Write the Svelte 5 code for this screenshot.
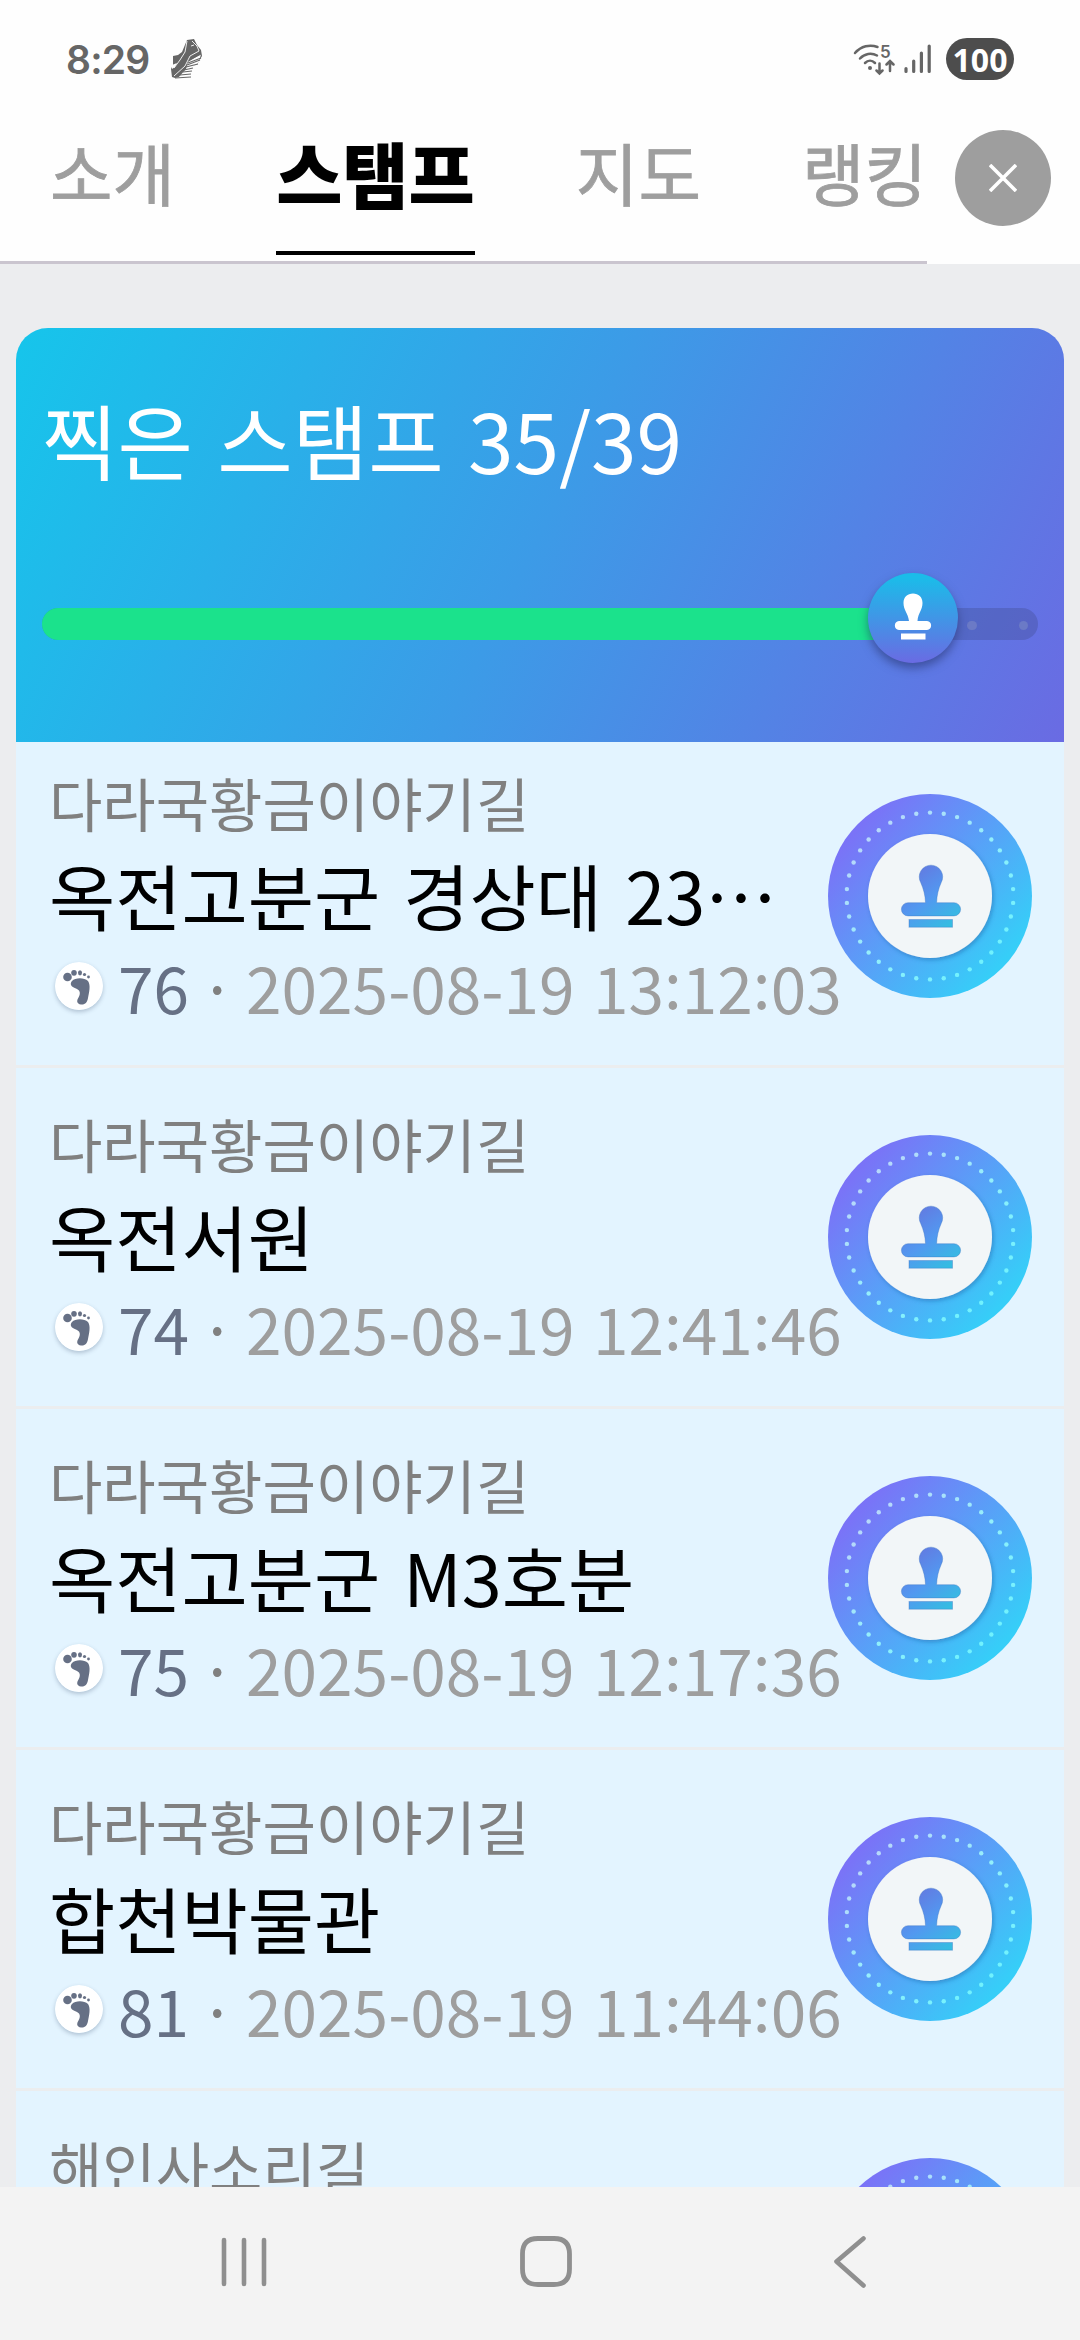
<script lang="ts">
  interface Stamp {
    trail: string;
    name?: string;
    steps?: number;
    time?: string;
  }

  const tabs = ['소개', '스탬프', '지도', '랭킹'];
  let active = $state('스탬프');

  const total = 39;
  const collected = 35;

  const stamps: Stamp[] = [
    { trail: '다라국황금이야기길', name: '옥전고분군 경상대 23…', steps: 76, time: '2025-08-19 13:12:03' },
    { trail: '다라국황금이야기길', name: '옥전서원', steps: 74, time: '2025-08-19 12:41:46' },
    { trail: '다라국황금이야기길', name: '옥전고분군 M3호분', steps: 75, time: '2025-08-19 12:17:36' },
    { trail: '다라국황금이야기길', name: '합천박물관', steps: 81, time: '2025-08-19 11:44:06' },
    { trail: '해인사소리길' }
  ];

  // ring of dots around the badge
  const dots = Array.from({ length: 38 }, (_, i) => {
    const a = (i / 38) * Math.PI * 2;
    return { x: 102 + Math.sin(a) * 83.4, y: 102 - Math.cos(a) * 83.4 };
  });
</script>

{#snippet badge()}
  <svg class="badge" viewBox="0 0 204 204">
    <defs>
      <linearGradient id="ring" x1="0.12" y1="0.2" x2="0.84" y2="0.84">
        <stop offset="0" stop-color="#7a73f7" />
        <stop offset="1" stop-color="#36cef8" />
      </linearGradient>
      <linearGradient id="handle" gradientUnits="userSpaceOnUse" x1="86" y1="74" x2="126" y2="128">
        <stop offset="0" stop-color="#6478e0" />
        <stop offset="0.5" stop-color="#5298f0" />
        <stop offset="1" stop-color="#35bde2" />
      </linearGradient>
      <linearGradient id="dot" x1="0" y1="0" x2="1" y2="1">
        <stop offset="0.1" stop-color="#c3cffb" />
        <stop offset="0.5" stop-color="#94effb" />
        <stop offset="1" stop-color="#56f4ff" />
      </linearGradient>
      <mask id="dotmask">
        {#each dots as d}
          <circle cx={d.x} cy={d.y} r="2.2" fill="#fff" />
        {/each}
      </mask>
      <filter id="lift" x="-20%" y="-20%" width="140%" height="140%">
        <feDropShadow dx="1.5" dy="2" stdDeviation="2" flood-color="#1f4f93" flood-opacity="0.4" />
      </filter>
    </defs>
    <circle cx="102" cy="102" r="102" fill="url(#ring)" />
    <rect width="204" height="204" fill="url(#dot)" mask="url(#dotmask)" />
    <circle cx="102" cy="102" r="62" fill="#f2f6f8" filter="url(#lift)" />
    <g fill="url(#handle)" stroke="#3e76c4" stroke-opacity="0.4" stroke-width="1">
      <path d="M97.500 108.700 C97.300 101 95.500 95 92.700 88.500 A11.700 11.700 0 1 1 113.200 88.500 C110.400 95 108.800 101 108.600 108.700 H126 A6.500 6.500 0 0 1 126 121.900 H80 A6.500 6.500 0 0 1 80 108.700 Z" />
      <rect x="81" y="125.500" width="43.500" height="7.700" />
    </g>
  </svg>
{/snippet}

<div class="screen">
  <div class="status">
    <span class="clock">8:29</span>
    <svg class="shoe" width="34" height="42" viewBox="0 0 34 42">
      <path fill="#666" d="M17 2 L24 1 L27 7 L31 12 L32 18 L28 25 L22 29 L13 38 L5 40 L2 39 L1 31 L3 27 L3 18 L8 17 L12 14 Z" />
      <path fill="#fefefe" d="M2 27 L7 25 L5 29 L2 31 Z M18 24 L31 16 L29 24 L22 30 L21 39 L8 40 L16 31 Z" />
      <path stroke="#fefefe" stroke-width="0.900" fill="none" d="M17 3 L15 14 L10 22 L4 30 M22 3 L27 8 L29 13 L20 18 L15 28 L4 38 M21 8 L24 7" />
      <path stroke="#666" stroke-width="1.100" fill="none" d="M19 22 L31 16 M18 25 L31 20 M17 27 L30 22 M16 29 L28 26 M14 32 L23 30 M13 34 L22 33 M10 37 L21 36 M5 40 L21 39" />
    </svg>
    <span class="spacer"></span>
    <svg class="wifi" width="42" height="34" viewBox="0 0 42 34" fill="none" stroke="#666" stroke-width="2.500" stroke-linecap="round">
      <path d="M2 10 C8 3 17 1 24.500 4" />
      <path d="M7 15.500 C11.500 10.500 18.500 9.500 24 12.500" />
      <path d="M12 20 C15 17 19 17 22 20" />
      <circle cx="17" cy="25" r="2" fill="#666" stroke="none" />
      <path d="M26.500 20.500 V30 M23.500 27.500 L26.500 30.500 L29.500 27.500 M37 28 V18.500 M33.500 21.500 L37 18 L40.500 21.500" />
      <text x="27" y="15" fill="#666" stroke="none" font-size="17" font-weight="600">5</text>
    </svg>
    <svg class="signal" width="28" height="30" viewBox="0 0 28 30" stroke="#666" stroke-width="3.200" stroke-linecap="round">
      <path d="M2 24.500 V27.500 M9.700 17 V27.500 M17.400 9 V27.500 M25.200 2 V27.500" />
    </svg>
    <span class="battery">100</span>
  </div>

  <header>
    <nav class="tabs">
      {#each tabs as tab}
        <button type="button" class:active={tab === active} onclick={() => (active = tab)}>{tab}</button>
      {/each}
    </nav>
    <button class="close" type="button" aria-label="닫기">
      <svg width="28" height="28" viewBox="0 0 28 28" stroke="#fff" stroke-width="3.600">
        <path d="M1 1 L27 27 M27 1 L1 27" />
      </svg>
    </button>
  </header>

  <main>
    <section class="summary">
      <h1>찍은 스탬프 {collected}/{total}</h1>
      <div class="track">
        <div class="fill" style:width="{((collected - 0.5) / total) * 100}%"></div>
        <div class="rest"><i></i><i></i></div>
        <svg class="knob" viewBox="0 0 90 90" style:left="{((collected - 0.9) / total) * 100}%">
          <defs>
            <linearGradient id="knob" x1="0" y1="0" x2="0" y2="1">
              <stop offset="0.050" stop-color="#1bbce9" />
              <stop offset="1" stop-color="#6a6be3" />
            </linearGradient>
          </defs>
          <circle cx="45" cy="45" r="45" fill="url(#knob)" />
          <path fill="#fff" d="M41 48 C40 40 35.500 37 35.500 30 C35.500 24 39.500 20.500 45 20.500 C50.500 20.500 54.500 24 54.500 30 C54.500 37 50 40 49.500 48 H59 C64.500 48 64.500 57 59 57 H31 C25.500 57 25.500 48 31 48 Z M33 60.500 H57.500 V66.500 H33 Z" />
        </svg>
      </div>
    </section>

    <ul>
      {#each stamps as stamp}
        <li>
          <div class="info">
            <p class="trail">{stamp.trail}</p>
            {#if stamp.name}
              <p class="name">{stamp.name}</p>
              <p class="meta">
                <svg class="foot" viewBox="0 0 48 48">
                  <circle cx="24" cy="24" r="24" fill="#fff" />
                  <g fill="#667085">
                    <circle cx="12.500" cy="15" r="4.300" />
                    <ellipse cx="19" cy="10.800" rx="2.800" ry="2.900" />
                    <ellipse cx="25" cy="10.800" rx="2" ry="2.600" />
                    <circle cx="29.500" cy="12.500" r="1.600" />
                    <circle cx="33.500" cy="15" r="1.400" />
                    <path d="M17 19 C20 15.500 29 15 33 19 C36 23 34 31 33 36 C32.500 40 30 43 26 42.500 C21.500 42 21.500 38.500 23.500 35.500 C26 31 25 28 21 26.500 C16 25 14.500 22 17 19 Z" />
                  </g>
                </svg>
                <span class="steps">{stamp.steps}</span>
                <span class="sep">·</span>
                <time>
                  {#each (stamp.time ?? '').split(':') as part, i}{#if i}<span class="colon">:</span>{/if}{part}{/each}
                </time>
              </p>
            {/if}
          </div>
          {@render badge()}
        </li>
      {/each}
    </ul>
  </main>

  <footer>
    <svg width="52" height="56" viewBox="0 0 52 56" stroke-width="4.600">
      <path d="M6 6 V50 M26 6 V50 M46 6 V50" />
    </svg>
    <svg width="52" height="56" viewBox="0 0 52 56" stroke-width="4.800">
      <path d="M18 4.500 H34 Q49.500 4.500 49.500 20 V35 Q49.500 50.500 34 50.500 H18 Q2.500 50.500 2.500 35 V20 Q2.500 4.500 18 4.500 Z" />
    </svg>
    <svg width="40" height="56" viewBox="0 0 40 56" stroke-width="4.600">
      <path d="M37.500 4.500 L10.500 27.500 L37.500 51.500" />
    </svg>
  </footer>
</div>

<style>
  :global(body) {
    margin: 0;
  }
  .screen {
    display: flex;
    flex-direction: column;
    width: 1080px;
    height: 2340px;
    overflow: hidden;
    background: #fefefe;
    font-family: "Noto Sans CJK KR", sans-serif;
  }
  button {
    border: 0;
    padding: 0;
    background: none;
    font-family: inherit;
  }
  p,
  h1,
  ul {
    margin: 0;
    padding: 0;
    font-weight: 400;
  }

  /* Status bar */
  .status {
    display: flex;
    align-items: center;
    height: 118px;
    padding: 0 66px;
    box-sizing: border-box;
    color: #666;
    font-family: Inter, sans-serif;
  }
  .clock {
    width: 104px;
    font-size: 39px;
    font-weight: 600;
    letter-spacing: -0.800px;
  }
  .spacer {
    flex: 1;
  }
  .wifi {
    margin: 2px 9px 0 0;
  }
  .signal {
    margin-right: 14px;
  }
  .battery {
    width: 68px;
    height: 42px;
    border-radius: 21px;
    background: #4d4d4d;
    color: #fff;
    font-family: "Open Sans", sans-serif;
    font-size: 32px;
    font-weight: 700;
    line-height: 43px;
    text-align: center;
  }

  /* Tab bar */
  header {
    display: flex;
    height: 146px;
  }
  .tabs {
    display: flex;
    gap: 101px;
    width: 927px;
    padding-left: 50px;
    box-sizing: border-box;
    border-bottom: 3px solid #cac5cf;
    overflow: hidden;
  }
  .tabs button {
    flex: none;
    height: 137px;
    padding-bottom: 29px;
    box-sizing: border-box;
    color: #9e9e9e;
    font-size: 68px;
    font-weight: 400;
    line-height: 96px;
    white-space: nowrap;
    -webkit-text-stroke: 0.800px #9e9e9e;
  }
  .tabs .active {
    padding-bottom: 25px;
    border-bottom: 4px solid #000;
    color: #000;
    font-size: 72px;
    font-weight: 900;
    -webkit-text-stroke: 0;
  }
  .close {
    display: flex;
    align-items: center;
    justify-content: center;
    width: 96px;
    height: 96px;
    margin: 12px 0 0 28px;
    border-radius: 50%;
    background: #9e9e9e;
  }

  /* Content */
  main {
    height: 1923px;
    padding: 64px 16px 0;
    box-sizing: border-box;
    overflow: hidden;
    background: #ecedef;
  }
  .summary {
    height: 414px;
    padding: 51px 26px 0;
    box-sizing: border-box;
    border-radius: 32px 32px 0 0;
    background: linear-gradient(116deg, #16c5eb, #3c9be7 50%, #6a6be3);
  }
  h1 {
    height: 229px;
    color: #fff;
    font-size: 82px;
    line-height: 120px;
    white-space: nowrap;
    word-spacing: 6px;
  }
  .track {
    position: relative;
    display: flex;
    height: 32px;
    border-radius: 16px;
    background: rgba(60, 70, 130, 0.3);
  }
  .fill {
    border-radius: 16px 0 0 16px;
    background: #1be28c;
  }
  .rest {
    display: flex;
    flex: 1;
    justify-content: flex-end;
    align-items: center;
    gap: 42px;
    padding: 3px 10px 0 0;
  }
  .rest i {
    width: 9.500px;
    height: 9.500px;
    border-radius: 50%;
    background: #6b7ac6;
  }
  .knob {
    position: absolute;
    top: -35px;
    width: 90px;
    height: 90px;
    margin-left: -45px;
    overflow: visible;
    filter: drop-shadow(0 5px 5px rgba(30, 40, 90, 0.5));
  }

  li {
    display: flex;
    height: 341px;
    padding: 32px 32px 0 33px;
    box-sizing: border-box;
    border-bottom: 3px solid #ebedef;
    background: #e3f4ff;
    list-style: none;
  }
  li:first-child {
    height: 326px;
    padding-top: 17px;
  }
  .info {
    width: 779px;
    white-space: nowrap;
  }
  .trail {
    color: #808080;
    font-size: 58px;
    line-height: 86px;
  }
  .name {
    color: #000;
    font-size: 72px;
    line-height: 97px;
    word-spacing: 7px;
  }
  .meta {
    display: flex;
    align-items: center;
    height: 88px;
    color: #9e9e9e;
    font-size: 64px;
    line-height: 88px;
    word-spacing: 4px;
  }
  .foot {
    flex: none;
    width: 48px;
    height: 48px;
    margin: 0 15px 0 6px;
    border-radius: 50%;
    box-shadow: 0 2px 4px rgba(60, 80, 110, 0.3);
  }
  .steps {
    color: #667085;
  }
  .sep {
    flex: none;
    width: 57px;
    color: #808080;
    text-align: center;
  }
  .colon {
    line-height: 0;
    vertical-align: 5px;
  }
  .badge {
    flex: none;
    width: 204px;
    height: 204px;
    margin-top: 35px;
  }

  /* System navigation */
  footer {
    display: flex;
    flex: 1;
    gap: 250px;
    padding: 47px 0 0 218px;
    background: #f3f3f3;
  }
  footer svg {
    overflow: visible;
    fill: none;
    stroke: #8f8f8f;
    stroke-linecap: round;
    stroke-linejoin: round;
  }
  footer svg:last-child {
    margin-left: 4px;
  }
</style>
